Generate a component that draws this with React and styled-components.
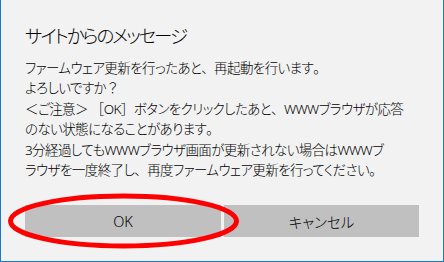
import React from "react";
import styled, { createGlobalStyle } from "styled-components";

const Global = createGlobalStyle`
  html, body { margin: 0; padding: 0; background: #f2f2f2; }
  * { box-sizing: border-box; }
`;

const Dialog = styled.div`
  position: relative;
  width: 444px;
  height: 262px;
  background: #f2f2f2;
  border: 1px solid #1979ca;
  border-top: none;
  padding: 22px 24px 0 24px;
  display: flex;
  flex-direction: column;
  font-family: "Noto Sans", "Noto Sans CJK JP", sans-serif;
  font-feature-settings: "palt";
  font-weight: 300;
  color: #000;
`;

const Title = styled.h1`
  margin: 0;
  font-size: 18.5px;
  font-weight: 300;
  line-height: 28px;
  letter-spacing: -2.1px;
  white-space: nowrap;
`;

const Body = styled.div`
  margin-top: 8px;
  font-size: 13.5px;
  line-height: 20.4px;
  letter-spacing: -0.6px;
`;

const Line = styled.div`
  white-space: nowrap;
`;

const Punct = styled.span`
  font-feature-settings: normal;
`;

const Buttons = styled.div`
  margin-top: 25px;
  display: flex;
  gap: 3px;
  width: 394px;
`;

const Button = styled.button`
  flex: 0 0 ${(p) => p.$w}px;
  height: 32px;
  border: none;
  background: #c0c0c0;
  font-family: inherit;
  font-weight: 300;
  font-feature-settings: "palt";
  font-size: 14.5px;
  color: #000;
  padding: 0;
`;

const Circle = styled.svg`
  position: absolute;
  left: 0;
  top: 0;
  pointer-events: none;
`;

const lines = [
  "ファームウェア更新を行ったあと、再起動を行います。",
  "よろしいですか？",
  "＜ご注意＞ ［OK］ボタンをクリックしたあと、WWWブラウザが応答",
  "のない状態になることがあります。",
  "3分経過してもWWWブラウザ画面が更新されない場合はWWWブ",
  "ラウザを一度終了し、再度ファームウェア更新を行ってください。",
];

const renderLine = (text) =>
  text.split(/([、。＜＞［］？])/).map((part, i) =>
    /^[、。＜＞［］？]$/.test(part) ? <Punct key={i}>{part}</Punct> : part
  );

export default function App() {
  return (
    <>
      <Global />
      <Dialog>
        <Title>サイトからのメッセージ</Title>
        <Body>
          {lines.map((l, i) => (
            <Line key={i}>{renderLine(l)}</Line>
          ))}
        </Body>
        <Buttons>
          <Button $w={196}>OK</Button>
          <Button $w={195}>キャンセル</Button>
        </Buttons>
        <Circle width="444" height="262" viewBox="0 0 444 262">
          <ellipse cx="122.5" cy="221" rx="113" ry="25" fill="none" stroke="#ff0000" strokeWidth="5" />
        </Circle>
      </Dialog>
    </>
  );
}
